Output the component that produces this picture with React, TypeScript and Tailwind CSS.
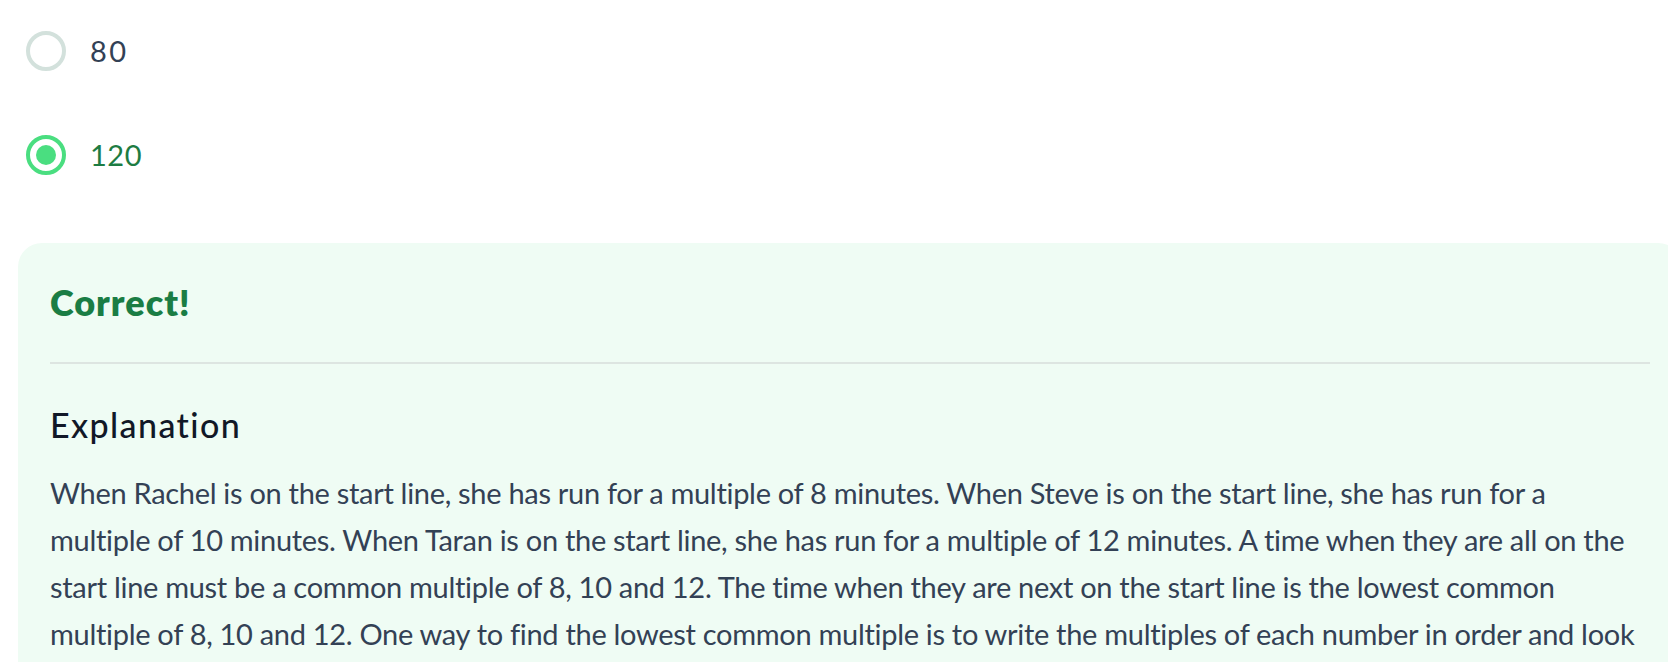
import { useState } from "react";

const options = ["80", "120"];

function Radio({ checked }: { checked: boolean }) {
  if (checked) {
    return (
      <span className="flex h-10 w-10 shrink-0 items-center justify-center rounded-full border-4 border-[#4ade80] bg-white">
        <span className="h-5 w-5 rounded-full bg-[#4ade80]" />
      </span>
    );
  }
  return <span className="h-10 w-10 shrink-0 rounded-full border-4 border-[#d3e1dc] bg-white" />;
}

export default function App() {
  const [selected] = useState("120");

  return (
    <div className="min-h-screen w-full overflow-x-hidden bg-white font-['Lato',sans-serif] [font-variant-ligatures:none]">
      {/* answer options */}
      <div className="flex flex-col gap-16 pl-[26px] pt-[31px]">
        {options.map((opt) => {
          const isChecked = opt === selected;
          return (
            <label key={opt} className="flex h-10 items-center gap-6">
              <Radio checked={isChecked} />
              <span
                className={
                  isChecked
                    ? "text-[29px] leading-[40px] tracking-[0.5px] text-[#1d7c43]"
                    : "text-[29px] leading-[40px] tracking-[2.5px] text-[#334155]"
                }
              >
                {opt}
              </span>
            </label>
          );
        })}
      </div>

      {/* feedback card */}
      <div className="ml-[18px] mt-[68px] w-[1664px] rounded-[24px] bg-[#effcf4] px-8 pt-[38px] pb-10">
        <h3 className="text-[36px] font-extrabold leading-[42px] tracking-[1px] text-[#1a7d44]">Correct!</h3>
        <hr className="mt-[39px] mb-[41px] border-t-2 border-[#dde5e1]" />
        <h4 className="text-[34px] font-medium leading-[40px] tracking-[1.4px] text-[#111827]">Explanation</h4>
        <p className="mt-[24px] text-[29px] leading-[47px] tracking-[-0.3px] text-[#334155]">
          When Rachel is on the start line, she has run for a multiple of 8 minutes. When Steve is on the
          start line, she has run for a multiple of 10 minutes. When Taran is on the start line, she has run
          for a multiple of 12 minutes. A time when they are all on the start line must be a common multiple
          of 8, 10 and 12. The time when they are next on the start line is the lowest common multiple of 8,
          10 and 12. One way to find the lowest common multiple is to write the multiples of each number in
          order and look for the first number that appears in all three lists. The lowest common multiple is
          120, so they will next be on the start line together after 120 minutes.
        </p>
      </div>
    </div>
  );
}
